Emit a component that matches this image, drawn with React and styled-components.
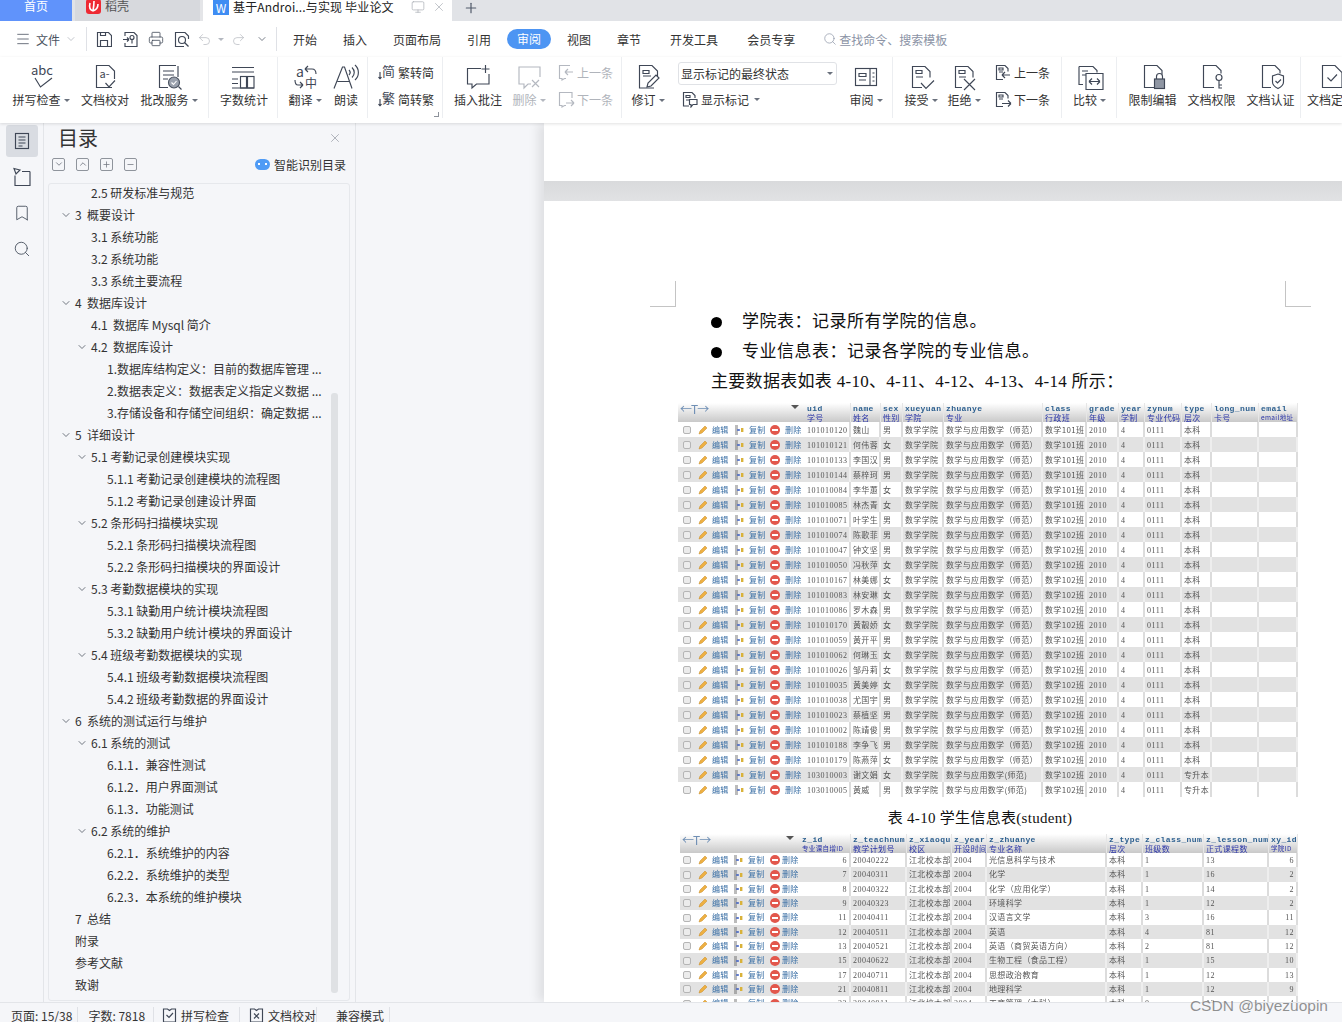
import React from 'react'
import styled, { createGlobalStyle } from 'styled-components'
import { Menu, ChevronDown, ChevronUp, Undo2, Redo2, Printer, Search, X, Plus, Minus, Monitor, Bookmark } from 'lucide-react'

const UI_FONT = '"Noto Sans CJK SC", "Noto Sans", sans-serif'
const DOC_FONT = '"Liberation Serif", "Noto Sans CJK SC", serif'

const GlobalStyle = createGlobalStyle`
  html, body { margin: 0; padding: 0; height: 100%; overflow: hidden; background: #fff; }
  body { font-family: ${UI_FONT}; color: #333; }
  * { box-sizing: border-box; }
`

const Text = ({ x, y, size = 10, children }) => (
  <text x={x} y={y} fontSize={size} fill='currentColor' stroke='none' fontFamily={UI_FONT}>{children}</text>
)

const ICONS = {
  spell: <><Text x={5} y={13} size={13}>abc</Text><path d='M9 16l5.5 9L26 16' /></>,
  proof: <><path d='M22 25.5H6.5v-22H19l5.5 5.5v8' /><Text x={9.5} y={16} size={11}>a-</Text><path d='M15.5 21l3.5 4 6-6.5' /></>,
  correct: <><path d='M22 3.5H5.5v22H14M24 4v11' /><path d='M9 9h11M9 13h11M9 17h5' /><circle cx='20' cy='20.5' r='5.5' fill='#9aa1ad' stroke='#4a5260' /><path d='M17.5 20.5l2 2 3-3.5' stroke='#fff' /><path d='M24.5 24.5l3 3' /></>,
  count: <><path d='M3 5.5h22M3 10h22M3 26h22' /><path d='M3 17h6M3 21.5h6' /><rect x='11.5' y='14.5' width='6' height='11.5' /><rect x='18.5' y='14.5' width='6.5' height='11.5' /></>,
  translate: <><Text x={6} y={15} size={14}>a</Text><Text x={15} y={26} size={12}>中</Text><path d='M15 7l3-3M15 7l3 3M15 7h7c3 0 4 2 4 5' /><path d='M13 23l-3 3M13 23l-3-3M13 23H8c-2 0-3-2-3-5' /></>,
  read: <><path d='M3 26.5L11.5 5h2L21 26.5M6.5 19.5h11.5' /><path d='M18 8c1.5 1.5 1.5 3.5 0 5M21 5.5c3 3 3 7 0 10M24 3c4.5 4 4.5 11 0 15' /></>,
  comment: <><path d='M18 6.5H4.5V22H9v4l4.5-4H26V12' /><path d='M22.5 3v8M18.5 7h8' /></>,
  delComment: <><path d='M26 15V5H5v17h5v4l4-4h3' /><path d='M18 18l7 7M25 18l-7 7' /></>,
  revise: <><path d='M21 26H6.5V3.5H19l5.5 5.5v6' /><path d='M10 8.5h6v3h-6zM10 14h8' /><path d='M14 25l1-4 8-8 3 3-8 8z' /></>,
  review: <><rect x='4.5' y='6.5' width='21' height='17' /><path d='M19 6.5v17M8 11.5h7v3H8zM8 18h7M21.5 11h2M21.5 15h2M21.5 19h2' /></>,
  accept: <><path d='M16 25.5H6.5v-21H19l5 5v6' /><path d='M10 8.5h6v3h-6zM10 15h7' /><path d='M15 21l5 5.5 8-8' /></>,
  reject: <><path d='M13 25.5H6.5v-21H19l5 5v6' /><path d='M10 8.5h6v3h-6zM10 15h7' /><path d='M15 17l11 11M26 17L15 28' /></>,
  compare: <><path d='M4 4.5h14l4 4v2M4 4.5v18h4' /><path d='M7 9h6M7 13h4' /><path d='M11 11.5h17v16H11z' /><path d='M14 19.5h11M14 19.5l3-3M14 19.5l3 3M25 19.5l-3-3M25 19.5l-3 3' /></>,
  lock: <><path d='M17 25.5H6.5v-22H19l5 5v4' /><rect x='16.5' y='17' width='10' height='9.5' fill='#8f96a3' /><path d='M18.5 17v-2.5a3 3 0 016 0V17' /></>,
  key: <><path d='M17 25.5H6.5v-22H19l5 5v3' /><circle cx='22' cy='15.5' r='3' /><path d='M22 18.5v8M22 23h3M22 26h3' /></>,
  shield: <><path d='M15 25.5H6.5v-22H19l5 5v3' /><path d='M22 12l5.5 2v6c0 3-2.5 5-5.5 6.5-3-1.5-5.5-3.5-5.5-6.5v-6z' /><path d='M19.5 19l2 2 3.5-3.5' /></>,
  finalize: <><path d='M26 25.5H6.5v-22H19l7 7z' /><path d='M11.5 15.5l3.5 3.5 6-6.5' /></>,
  toJian: <><Text x={4} y={13} size={13}>简</Text><path d='M2 9v7M2 16l-1.5-2M2 16l1.5-2' /></>,
  toFan: <><Text x={4} y={13} size={13}>繁</Text><path d='M2 9v7M2 16l-1.5-2M2 16l1.5-2' /></>,
  prevC: <><path d='M13 2.5H2.5v13H5V17l2.5-1.5H9' /><path d='M16 9H8M8 9l3-3M8 9l3 3' /></>,
  nextC: <><path d='M15 8V2.5H2.5v13H5V17l2.5-1.5H9' /><path d='M9 13h8M17 13l-3-3M17 13l-3 3' /></>,
  prevD: <><path d='M9 16.5H2.5v-14H11l3 3v3' /><path d='M5 5h4v2H5zM5 9h4' /><path d='M16 12H8M8 12l3-3M8 12l3 3' /></>,
  nextD: <><path d='M9 16.5H2.5v-14H11l3 3v3' /><path d='M5 5h4v2H5zM5 9h4' /><path d='M8 13.5h9M17 13.5l-3-3M17 13.5l-3 3' /></>,
  marks: <><path d='M8 16H2.5V2.5H11l3 3V8' /><path d='M5 5.5h4v2H5zM5 10h3' /><path d='M8.5 9.5h7.5v5h-4L10 17v-2.5H8.5z' /></>,
  save: <><path d='M1.5 1.5h11l3 3v11h-14z' /><path d='M4.5 15.5v-6h7v6M4.5 1.5v3h5v-3' /></>,
  export: <><path d='M3 5V1.5h9l3 3v11H3V12' /><path d='M1 8.5h6M7 8.5L5 6.5M7 8.5l-2 2' /><circle cx='10' cy='6.5' r='2' /><path d='M10 8.5v4' /></>,
  preview: <><path d='M10 15.5H1.5v-14H11l3.5 3.5v3' /><circle cx='8' cy='9' r='3.5' /><path d='M10.5 11.5l4 4' /></>,
  outline: <><path d='M2 1.5l6 1.5-4 4zM10 4.5h8M3 8.5v10h15v-14' /></>,
  page: <><rect x='3.5' y='2.5' width='13' height='15' /><path d='M6.5 6h7M6.5 9h7M6.5 12h7M6.5 15h4' /></>,
  checkDoc: <><path d='M1.5 2h4l2 1.5L9.5 2h4v13h-12z' /><path d='M4.5 8l2.5 2.5 4-4.5' /></>,
  crossDoc: <><path d='M1.5 2h4l2 1.5L9.5 2h4v13h-12z' /><path d='M5 6.5l5 5M10 6.5l-5 5' /></>,
}

const Svg = styled.svg`
  flex: none;
  fill: none;
  stroke: currentColor;
  stroke-width: 1.15;
  color: ${p => (p.$muted ? '#b4b8c0' : '#3f4756')};
`

const Icon = ({ name, size = 30, box, muted }) => (
  <Svg viewBox={`0 0 ${box || size} ${box || size}`} width={size} height={size} $muted={muted}>{ICONS[name]}</Svg>
)

const Page = styled.div`
  position: relative;
  width: 1342px;
  height: 1022px;
  overflow: hidden;
  display: flex;
  flex-direction: column;
`

/* title bar */
const TabBar = styled.div`
  flex: none;
  height: 21px;
  background: #e1e3e7;
  display: flex;
  font-size: 12px;
  line-height: 12px;
`
const HomeTab = styled.div`
  width: 72px;
  background: #6093fb;
  color: #fff;
  text-align: center;
`
const ShellTab = styled.div`
  width: 128px;
  margin-left: 3px;
  background: #d7d9dd;
  border-right: 3px solid #e4e5e8;
  display: flex;
  gap: 4px;
  padding-left: 11px;
  color: #555;
`
const ShellLogo = styled.span`
  width: 15px;
  height: 15px;
  margin-top: -1px;
  border-radius: 3px;
  background: #ee2a33;
  display: flex;
  justify-content: center;
`
const DocTab = styled.div`
  width: 249px;
  background: #fff;
  display: flex;
  padding-left: 10px;
  font-size: 12px;
  line-height: 14px;
  letter-spacing: .15px;
  color: #222;
  white-space: nowrap;
`
const DocLogo = styled.span`
  width: 16px;
  height: 15px;
  background: #3f8df3;
  color: #fff;
  margin-right: 4px;
  display: flex;
  align-items: center;
  justify-content: center;
`
const DocTabTitle = styled.span`
  width: 178px;
`
const TabActions = styled.span`
  display: flex;
  gap: 7px;
  color: #a9adb5;
`
const NewTab = styled.span`
  margin-left: 11px;
  color: #515a6b;
`

/* menu row */
const MenuBar = styled.div`
  flex: none;
  height: 36px;
  background: #fff;
  display: flex;
  align-items: center;
  padding-left: 15px;
  font-size: 12px;
  color: #333;
`
const FileMenu = styled.div`
  display: flex;
  align-items: center;
  width: 71px;
  gap: 5px;
  color: #4a5260;
`
const VBar = styled.span`
  width: 1px;
  height: 24px;
  background: #dfe1e6;
`
const QuickBar = styled.div`
  display: flex;
  align-items: center;
  width: 189px;
  padding-left: 9px;
  gap: 10px;
  color: #3f4756;
`
const GhostIcons = styled.span`
  display: flex;
  align-items: center;
  gap: 3px;
  margin-left: -3px;
  color: #b9bcc3;
`
const Caret = styled.i`
  display: inline-block;
  flex: none;
  margin-left: 3px;
  width: 0;
  height: 0;
  vertical-align: middle;
  border-left: 3px solid transparent;
  border-right: 3px solid transparent;
  border-top: 3px solid ${p => (p.$muted ? '#b4b8c0' : '#6a717d')};
`
const TabList = styled.nav`
  display: flex;
  align-items: center;
  padding-left: 3px;
`
const MenuTab = styled.span`
  padding: 0 13px 0 ${p => (p.$wide ? '16px' : '13px')};
  white-space: nowrap;
  color: #333;
`
const ActiveMenuTab = styled.span`
  margin: 0 3px;
  padding: 0 10px;
  height: 20px;
  line-height: 20px;
  border-radius: 10px;
  background: #4d95f3;
  color: #fff;
`
const SearchBox = styled.div`
  margin-left: 15px;
  display: flex;
  align-items: center;
  gap: 2px;
  color: #8b93a5;
`

/* ribbon */
const Ribbon = styled.div`
  position: relative;
  flex: none;
  height: 66px;
  background: #fff;
  display: flex;
  box-shadow: 0 1px 3px rgba(0, 0, 0, .12);
  z-index: 2;
`
const Group = styled.div`
  flex: none;
  position: relative;
  width: ${p => p.$w}px;
  padding-left: ${p => p.$pad || 0}px;
  display: flex;
  margin-bottom: 5px;
  border-right: ${p => (p.$last ? 'none' : '1px solid #eceef1')};
`
const Tool = styled.div`
  flex: none;
  width: ${p => p.$w}px;
  display: flex;
  flex-direction: column;
  align-items: center;
  padding-top: 5px;
  font-size: 12px;
  line-height: 16px;
  white-space: nowrap;
  color: ${p => (p.$muted ? '#b0b4bb' : '#333')};
`
const ToolLabel = styled.span`
  display: flex;
  align-items: center;
`
const Stack = styled.div`
  flex: none;
  margin-left: ${p => p.$gap || 0}px;
  display: flex;
  flex-direction: column;
  gap: 7px;
  padding-top: 5px;
`
const StackRow = styled.div`
  height: 20px;
  display: flex;
  align-items: center;
  gap: 2px;
  font-size: 12px;
  white-space: nowrap;
  color: ${p => (p.$muted ? '#b0b4bb' : '#333')};
`
const Launcher = styled.i`
  position: absolute;
  right: 3px;
  bottom: 1px;
  width: 5px;
  height: 5px;
  border-right: 1px solid #8d929b;
  border-bottom: 1px solid #8d929b;
`
const Marks = styled.div`
  flex: none;
  width: 159px;
  margin-left: 4px;
  padding-top: 5px;
`
const MarkSelect = styled.div`
  height: 23px;
  border: 1px solid #e0e2e6;
  border-radius: 3px;
  display: flex;
  align-items: center;
  justify-content: space-between;
  padding: 0 3px 0 2px;
  font-size: 12px;
  color: #333;
`
const ShowMarks = styled.div`
  margin-top: 3px;
  padding-left: 3px;
  height: 22px;
  display: flex;
  align-items: center;
  gap: 2px;
  font-size: 12px;
`

/* body */
const Body = styled.div`
  flex: 1;
  min-height: 0;
  display: grid;
  grid-template-columns: 44px 312px 188px 1fr;
  background: #f5f6f9;
`
const Rail = styled.div`
  border-right: 1px solid #e3e5e9;
  padding: 2px 6px 0;
  display: flex;
  flex-direction: column;
  gap: 4px;
  color: #4a5260;
`
const RailItem = styled.div`
  width: 32px;
  height: 32px;
  border-radius: 3px;
  background: ${p => (p.$active ? '#d9dce2' : 'transparent')};
  display: flex;
  align-items: center;
  justify-content: center;
`
const Panel = styled.div`
  border-right: 1px solid #e3e5e9;
  display: flex;
  flex-direction: column;
  padding: 0 5px 1px 4px;
  min-height: 0;
`
const PanelHead = styled.div`
  height: 30px;
  display: flex;
  align-items: center;
  justify-content: space-between;
  padding: 0 8px 0 10px;
  color: #8a8f99;
`
const PanelTitle = styled.h2`
  margin: 0;
  font-size: 20px;
  line-height: 28px;
  font-weight: 400;
  color: #333;
`
const PanelTools = styled.div`
  height: 22px;
  margin-bottom: 8px;
  display: flex;
  align-items: center;
  padding: 0 4px;
  gap: 11px;
`
const TreeButton = styled.span`
  width: 13px;
  height: 13px;
  border: 1px solid #8f949c;
  border-radius: 2px;
  display: flex;
  align-items: center;
  justify-content: center;
  color: #70757f;
`
const SmartToc = styled.div`
  margin-left: auto;
  display: flex;
  align-items: center;
  gap: 4px;
  font-size: 12px;
`
const SmartBadge = styled.span`
  position: relative;
  width: 15px;
  height: 11px;
  border-radius: 6px;
  background: #4f9bf5;
  &::after {
    content: '';
    position: absolute;
    left: 3px;
    right: 3px;
    top: 4px;
    height: 2px;
    border-left: 2px solid #fff;
    border-right: 2px solid #fff;
  }
`
const Tree = styled.div`
  position: relative;
  flex: 1;
  min-height: 0;
  overflow: hidden;
  border: 1px solid #e6e8ec;
  border-radius: 3px;
`
const TreeList = styled.div`
  margin-top: -2.5px;
`
const Scrollbar = styled.i`
  position: absolute;
  right: 11px;
  top: 209px;
  bottom: 7px;
  width: 7px;
  border-radius: 3px;
  background: #dfe1e4;
`
const TocRow = styled.div`
  height: 22px;
  padding-left: ${p => 11 + (p.$level - 1) * 16}px;
  display: flex;
  align-items: center;
  font-size: 12px;
  white-space: pre;
  color: #333;
`
const Chevron = styled.span`
  flex: none;
  width: 15px;
  display: flex;
  color: #444c58;
`
const Gutter = styled.div`
  background: #f5f6f9;
`
const DocArea = styled.div`
  position: relative;
  min-height: 0;
  overflow: hidden;
  background: #fff;
  box-shadow: -6px 0 10px rgba(0, 0, 0, .09);
`
const PrevPage = styled.div`
  height: 58px;
  background: #fff;
`
const PageGap = styled.div`
  height: 20px;
  background: linear-gradient(#d9dadc, #e1e2e4);
`
const Sheet = styled.div`
  position: relative;
  background: #fff;
  padding-top: 106px;
  font-family: ${DOC_FONT};
  color: #111;
`
const CropMark = styled.i`
  position: absolute;
  top: 80px;
  left: ${p => p.$x}px;
  width: 26px;
  height: 26px;
  border-bottom: 1px solid #c4c4c4;
  ${p => (p.$flip ? 'border-left' : 'border-right')}: 1px solid #c4c4c4;
`
const Line = styled.p`
  margin: 0;
  height: 30px;
  line-height: 30px;
  padding-left: 167px;
  font-size: 17px;
  letter-spacing: ${p => (p.$tight ? '.3px' : '.5px')};
  white-space: nowrap;
  display: flex;
  align-items: center;
`
const Bullet = styled.i`
  flex: none;
  width: 11px;
  height: 11px;
  margin-right: 20px;
  border-radius: 50%;
  background: #000;
`
const Caption = styled.p`
  margin: 11px 0 6px;
  height: 20px;
  line-height: 20px;
  text-align: center;
  padding-left: 74px;
  font-size: 15px;
  letter-spacing: .3px;
`

/* pasted table screenshots */
const Shot = styled.div`
  margin-left: ${p => p.$left}px;
  margin-top: ${p => p.$top || 0}px;
  width: ${p => p.$width}px;
  filter: blur(.35px);
  font-family: ${DOC_FONT};
  font-size: 8px;
  letter-spacing: .35px;
  color: #555;
`
const ShotRow = styled.div`
  display: grid;
  grid-template-columns: ${p => p.$cols};
  height: ${p => p.$h}px;
  line-height: ${p => p.$h}px;
  background: ${p => (p.$alt ? '#e2e2e2' : '#fff')};
  white-space: nowrap;
  overflow: hidden;
`
const ShotHead = styled(ShotRow)`
  height: 19px;
  line-height: 9px;
  background: linear-gradient(#fff, #c9c9c9);
`
const HeadCell = styled.div`
  padding: 1px 0 0 2px;
  border-right: 1px solid #e6e6e6;
  overflow: hidden;
`
const FieldName = styled.div`
  font-family: "Liberation Mono", monospace;
  font-weight: 700;
  font-size: 8px;
  letter-spacing: .4px;
  color: #2c5f8f;
`
const FieldCn = styled.div`
  font-family: ${UI_FONT};
  font-size: ${p => (p.$small ? '6.5px' : '8px')};
  color: #2b35a8;
`
const SortBar = styled.div`
  display: flex;
  align-items: flex-start;
  justify-content: space-between;
  padding: 0 6px 0 2px;
  font-family: ${UI_FONT};
  font-size: 12px;
  line-height: 11px;
  letter-spacing: -1px;
  color: #6f8fb5;
`
const SortCaret = styled.i`
  margin-top: 2px;
  border-left: 4px solid transparent;
  border-right: 4px solid transparent;
  border-top: 4px solid #555;
`
const Cell = styled.div`
  padding: 0 2px;
  border-right: 2px solid ${p => (p.$alt ? '#eee' : '#dcdcdc')};
  text-align: ${p => (p.$num ? 'right' : 'left')};
  overflow: hidden;
  font-family: ${UI_FONT};
`
const NumText = styled.span`
  font-family: ${DOC_FONT};
  letter-spacing: .5px;
`
const Actions = styled.div`
  display: flex;
  align-items: center;
  padding-left: ${p => p.$pad}px;
  font-family: ${UI_FONT};
  color: #3a6fa5;
`
const RowCheck = styled.i`
  flex: none;
  width: 8px;
  height: 8px;
  margin-right: 7px;
  border: 1px solid #b5b5b5;
  border-radius: 2px;
  background: #ececec;
`
const ActionLabel = styled.span`
  flex: none;
  width: ${p => p.$w}px;
`
const DropIcon = styled.i`
  flex: none;
  width: 10px;
  height: 10px;
  margin-right: ${p => p.$gap}px;
  border-radius: 50%;
  background: #e2574c;
  position: relative;
  &::after {
    content: '';
    position: absolute;
    left: 2px;
    right: 2px;
    top: 4px;
    height: 2px;
    background: #fff;
  }
`

const Pencil = () => (
  <svg viewBox='0 0 10 10' width={10} height={10} style={{ flex: 'none', marginRight: 4 }}>
    <path d='M1 9l1-3 5-5 2 2-5 5z' fill='#eeb042' stroke='#c98a25' strokeWidth='.5' />
  </svg>
)

const ChangeIcon = () => (
  <svg viewBox='0 0 10 10' width={10} height={10} style={{ flex: 'none', marginRight: 5 }}>
    <path d='M1 1h3M1 3h3M1 5h4M1 7h3M1 9h3' stroke='#555' strokeWidth='.8' />
    <path d='M3 5h3' stroke='#4466cc' strokeWidth='1.4' />
    <rect x='7' y='3' width='2.4' height='4' fill='#d9b23a' />
  </svg>
)

function DataShot ({ left, top, width, cols, rowH, pad, gaps, dropGap, columns, rows }) {
  return (
    <Shot $left={left} $top={top} $width={width}>
      <ShotHead $cols={cols} $h={19}>
        <SortBar><span>←T→</span><SortCaret /></SortBar>
        {columns.map(c => (
          <HeadCell key={c[0]}>
            <FieldName>{c[0]}</FieldName>
            <FieldCn $small={c[3]}>{c[1]}</FieldCn>
          </HeadCell>
        ))}
      </ShotHead>
      {rows.map((row, i) => (
        <ShotRow key={i} $cols={cols} $h={rowH} $alt={i % 2 === 1}>
          <Actions $pad={pad}>
            <RowCheck />
            <Pencil />
            <ActionLabel $w={gaps[0]}>编辑</ActionLabel>
            <ChangeIcon />
            <ActionLabel $w={gaps[1]}>复制</ActionLabel>
            <DropIcon $gap={dropGap} />
            <ActionLabel $w={18}>删除</ActionLabel>
          </Actions>
          {row.map((v, j) => (
            <Cell key={j} $alt={i % 2 === 1} $num={columns[j][2]}>
              {/^[\d]+$/.test(v) ? <NumText>{v}</NumText> : v}
            </Cell>
          ))}
        </ShotRow>
      ))}
    </Shot>
  )
}

const STUDENTS = [
  ['101010120', '魏山', '男'], ['101010121', '何伟蓉', '女'], ['101010133', '李国汉', '男'],
  ['101010144', '蔡梓珂', '男'], ['101010084', '李华蕙', '女'], ['101010085', '林杰青', '女'],
  ['101010071', '叶学生', '男'], ['101010074', '陈歌菲', '男'], ['101010047', '钟文坚', '男'],
  ['101010050', '冯秋萍', '女'], ['101010167', '林美娜', '女'], ['101010083', '林安琳', '女'],
  ['101010086', '罗木森', '男'], ['101010170', '黄靓娇', '女'], ['101010059', '黄开平', '男'],
  ['101010062', '何琳玉', '女'], ['101010026', '邹丹莉', '女'], ['101010035', '黄美婷', '女'],
  ['101010038', '尤国宇', '男'], ['101010023', '蔡植坚', '男'], ['101010002', '陈靖俊', '男'],
  ['101010188', '李争飞', '男'], ['101010179', '陈燕萍', '女'], ['103010003', '谢文娟', '女'],
  ['103010005', '黄威', '男'],
]

const studentRows = STUDENTS.map((s, i) => [
  s[0], s[1], s[2], '数学学院',
  i > 22 ? '数学与应用数学(师范)' : '数学与应用数学（师范）',
  i < 6 ? '数学101班' : '数学102班',
  '2010', '4', '0111', i > 22 ? '专升本' : '本科', '', '',
])

const STUDENT_COLS = [
  ['uid', '学号'], ['name', '姓名'], ['sex', '性别'], ['xueyuan', '学院'], ['zhuanye', '专业'],
  ['class', '行政班'], ['grade', '年级'], ['year', '学制'], ['zynum', '专业代码'], ['type', '层次'],
  ['long_num', '卡号'], ['email', 'email地址', false, true],
]

const COURSE_COLS = [
  ['z_id', '专业课自增ID', true, true], ['z_teachnum', '教学计划号'], ['z_xiaoqu', '校区'], ['z_year', '开设时间'],
  ['z_zhuanye', '专业名称'], ['z_type', '层次'], ['z_class_num', '班级数'], ['z_lesson_num', '正式课程数'],
  ['xy_id', '学院ID', true, true],
]

const courseRows = [
  ['6', '20040222', '光信息科学与技术', '1', '13', '6'],
  ['7', '20040311', '化学', '1', '16', '2'],
  ['8', '20040322', '化学（应用化学）', '1', '14', '2'],
  ['9', '20040323', '环境科学', '1', '12', '2'],
  ['11', '20040411', '汉语言文学', '3', '16', '11'],
  ['12', '20040511', '英语', '4', '81', '12'],
  ['13', '20040521', '英语（商贸英语方向）', '2', '81', '12'],
  ['15', '20040622', '生物工程（食品工程）', '1', '15', '10'],
  ['17', '20040711', '思想政治教育', '1', '12', '13'],
  ['21', '20040811', '地理科学', '1', '12', '9'],
  ['22', '20040911', '工商管理（本科）', '0', '12', '4'],
].map(r => [r[0], r[1], '江北校本部', '2004', r[2], '本科', r[3], r[4], r[5]])

const TOC = [
  [2, '2.5 研发标准与规范'],
  [1, '3  概要设计', 1],
  [2, '3.1 系统功能'],
  [2, '3.2 系统功能'],
  [2, '3.3 系统主要流程'],
  [1, '4  数据库设计', 1],
  [2, '4.1  数据库 Mysql 简介'],
  [2, '4.2  数据库设计', 1],
  [3, '1.数据库结构定义：目前的数据库管理 ...'],
  [3, '2.数据表定义：数据表定义指定义数据 ...'],
  [3, '3.存储设备和存储空间组织：确定数据 ...'],
  [1, '5  详细设计', 1],
  [2, '5.1 考勤记录创建模块实现', 1],
  [3, '5.1.1 考勤记录创建模块的流程图'],
  [3, '5.1.2 考勤记录创建设计界面'],
  [2, '5.2 条形码扫描模块实现', 1],
  [3, '5.2.1 条形码扫描模块流程图'],
  [3, '5.2.2 条形码扫描模块的界面设计'],
  [2, '5.3 考勤数据模块的实现', 1],
  [3, '5.3.1 缺勤用户统计模块流程图'],
  [3, '5.3.2 缺勤用户统计模块的界面设计'],
  [2, '5.4 班级考勤数据模块的实现', 1],
  [3, '5.4.1 班级考勤数据模块流程图'],
  [3, '5.4.2 班级考勤数据的界面设计'],
  [1, '6  系统的测试运行与维护', 1],
  [2, '6.1 系统的测试', 1],
  [3, '6.1.1．兼容性测试'],
  [3, '6.1.2．用户界面测试'],
  [3, '6.1.3．功能测试'],
  [2, '6.2 系统的维护', 1],
  [3, '6.2.1．系统维护的内容'],
  [3, '6.2.2．系统维护的类型'],
  [3, '6.2.3．本系统的维护模块'],
  [1, '7  总结'],
  [1, '附录'],
  [1, '参考文献'],
  [1, '致谢'],
]

/* status bar */
const StatusBar = styled.div`
  flex: none;
  position: relative;
  z-index: 2;
  height: 20px;
  background: #f5f6f9;
  border-top: 1px solid #e3e5e9;
  display: flex;
  padding-top: 4px;
  padding-left: 1px;
  font-size: 12px;
  line-height: 18px;
  color: #333;
  white-space: nowrap;
  overflow: hidden;
`
const StatusItem = styled.div`
  display: flex;
  align-items: flex-start;
  gap: 4px;
  padding: 0 ${p => p.$r}px 0 ${p => p.$l}px;
  border-right: 1px solid #dfe1e6;
`
const Watermark = styled.div`
  position: absolute;
  right: 14px;
  bottom: 7px;
  z-index: 3;
  font-family: "Liberation Sans", sans-serif;
  font-size: 15.5px;
  color: rgba(110, 110, 110, .75);
`

function Tool2 ({ icon, label, w, caret, muted }) {
  return (
    <Tool $w={w} $muted={muted}>
      <Icon name={icon} muted={muted} />
      <ToolLabel>{label}{caret && <Caret $muted={muted} />}</ToolLabel>
    </Tool>
  )
}

function App () {
  return (
    <Page>
      <GlobalStyle />
      <TabBar>
        <HomeTab>首页</HomeTab>
        <ShellTab>
          <ShellLogo>
            <svg viewBox='0 0 15 15' width={15} height={15} fill='none' stroke='#fff' strokeWidth='1.6'>
              <path d='M4 4c-1 4 0 7 3 8M8 2c0 4-.5 7-1 10M12 5c0 3-2 6-5 7' />
            </svg>
          </ShellLogo>
          稻壳
        </ShellTab>
        <DocTab>
          <DocLogo>W</DocLogo>
          <DocTabTitle>基于Androi...与实现 毕业论文</DocTabTitle>
          <TabActions><Monitor size={14} strokeWidth={1.2} /><X size={14} strokeWidth={1.2} /></TabActions>
        </DocTab>
        <NewTab><Plus size={16} strokeWidth={1.8} /></NewTab>
      </TabBar>

      <MenuBar>
        <FileMenu>
          <Menu size={16} strokeWidth={1.2} />
          <span>文件</span>
          <ChevronDown size={12} strokeWidth={1.2} color='#9aa0aa' />
        </FileMenu>
        <VBar />
        <QuickBar>
          <Icon name='save' size={16} />
          <Icon name='export' size={16} />
          <Printer size={16} strokeWidth={1.2} />
          <Icon name='preview' size={16} />
          <GhostIcons><Undo2 size={15} strokeWidth={1.2} /><Caret $muted /></GhostIcons>
          <GhostIcons><Redo2 size={15} strokeWidth={1.2} /></GhostIcons>
          <ChevronDown size={12} strokeWidth={1.4} />
        </QuickBar>
        <VBar />
        <TabList>
          <MenuTab>开始</MenuTab>
          <MenuTab>插入</MenuTab>
          <MenuTab>页面布局</MenuTab>
          <MenuTab>引用</MenuTab>
          <ActiveMenuTab>审阅</ActiveMenuTab>
          <MenuTab>视图</MenuTab>
          <MenuTab>章节</MenuTab>
          <MenuTab $wide>开发工具</MenuTab>
          <MenuTab $wide>会员专享</MenuTab>
        </TabList>
        <SearchBox><Search size={14} strokeWidth={1.2} />查找命令、搜索模板</SearchBox>
      </MenuBar>

      <Ribbon>
        <Group $w={209} $pad={9}>
          <Tool2 w={64} icon='spell' label='拼写检查' caret />
          <Tool2 w={64} icon='proof' label='文档校对' />
          <Tool2 w={64} icon='correct' label='批改服务' caret />
        </Group>
        <Group $w={69}><Tool2 w={70} icon='count' label='字数统计' /></Group>
        <Group $w={90}>
          <Tool2 w={54} icon='translate' label='翻译' caret />
          <Tool2 w={28} icon='read' label='朗读' />
        </Group>
        <Group $w={75} $pad={10}>
          <Stack>
            <StackRow><Icon name='toJian' size={18} />繁转简</StackRow>
            <StackRow><Icon name='toFan' size={18} />简转繁</StackRow>
          </Stack>
          <Launcher />
        </Group>
        <Group $w={179}>
          <Tool2 w={70} icon='comment' label='插入批注' />
          <Tool2 w={32} icon='delComment' label='删除' caret muted />
          <Stack $gap={12}>
            <StackRow $muted><Icon name='prevC' size={18} muted />上一条</StackRow>
            <StackRow $muted><Icon name='nextC' size={18} muted />下一条</StackRow>
          </Stack>
        </Group>
        <Group $w={271}>
          <Tool2 w={52} icon='revise' label='修订' caret />
          <Marks>
            <MarkSelect>显示标记的最终状态<Caret /></MarkSelect>
            <ShowMarks><Icon name='marks' size={18} />显示标记<Caret /></ShowMarks>
          </Marks>
          <Tool2 w={58} icon='review' label='审阅' caret />
        </Group>
        <Group $w={169}>
          <Tool2 w={56} icon='accept' label='接受' caret />
          <Tool2 w={30} icon='reject' label='拒绝' caret />
          <Stack $gap={15}>
            <StackRow><Icon name='prevD' size={18} />上一条</StackRow>
            <StackRow><Icon name='nextD' size={18} />下一条</StackRow>
          </Stack>
        </Group>
        <Group $w={55}><Tool2 w={55} icon='compare' label='比较' caret /></Group>
        <Group $w={184} $pad={6}>
          <Tool2 w={59} icon='lock' label='限制编辑' />
          <Tool2 w={59} icon='key' label='文档权限' />
          <Tool2 w={59} icon='shield' label='文档认证' />
        </Group>
        <Group $w={41} $last>
          <Tool2 w={60} icon='finalize' label='文档定稿' />
        </Group>
      </Ribbon>

      <Body>
        <Rail>
          <RailItem $active><Icon name='page' size={20} /></RailItem>
          <RailItem><Icon name='outline' size={20} /></RailItem>
          <RailItem><Bookmark size={18} strokeWidth={1.2} /></RailItem>
          <RailItem><Search size={18} strokeWidth={1.2} /></RailItem>
        </Rail>
        <Panel>
          <PanelHead>
            <PanelTitle>目录</PanelTitle>
            <X size={14} strokeWidth={1.1} />
          </PanelHead>
          <PanelTools>
            <TreeButton><ChevronDown size={10} /></TreeButton>
            <TreeButton><ChevronUp size={10} /></TreeButton>
            <TreeButton><Plus size={9} /></TreeButton>
            <TreeButton><Minus size={9} /></TreeButton>
            <SmartToc><SmartBadge />智能识别目录</SmartToc>
          </PanelTools>
          <Tree>
            <TreeList>
              {TOC.map(([level, title, open]) => (
                <TocRow key={title} $level={level}>
                  <Chevron>{open && <ChevronDown size={12} strokeWidth={1.5} />}</Chevron>
                  {title}
                </TocRow>
              ))}
            </TreeList>
            <Scrollbar />
          </Tree>
        </Panel>
        <Gutter />
        <DocArea>
          <PrevPage />
          <PageGap />
          <Sheet>
            <CropMark $x={106} />
            <CropMark $x={741} $flip />
            <Line><Bullet />学院表：记录所有学院的信息。</Line>
            <Line><Bullet />专业信息表：记录各学院的专业信息。</Line>
            <Line $tight>主要数据表如表 4-10、4-11、4-12、4-13、4-14 所示：</Line>
            <DataShot
              left={134}
              top={6}
              width={620}
              cols='127px 46px 30px 22px 41px 99px 44px 32px 26px 37px 30px 47px 39px'
              rowH={15}
              pad={5}
              gaps={[22, 21]}
              dropGap={5}
              columns={STUDENT_COLS}
              rows={studentRows}
            />
            <Caption>表 4-10 学生信息表(student)</Caption>
            <DataShot
              left={136}
              width={618}
              cols='120px 51px 56px 45px 35px 120px 36px 61px 65px 29px'
              rowH={14.35}
              pad={3}
              gaps={[21, 22]}
              dropGap={2}
              columns={COURSE_COLS}
              rows={courseRows}
            />
          </Sheet>
        </DocArea>
      </Body>

      <StatusBar>
        <StatusItem $l={10} $r={5}>页面: 15/38</StatusItem>
        <StatusItem $l={10} $r={8}>字数: 7818</StatusItem>
        <StatusItem $l={8} $r={10}><Icon name='checkDoc' size={15} />拼写检查</StatusItem>
        <StatusItem $l={9} $r={0}><Icon name='crossDoc' size={15} />文档校对</StatusItem>
        <StatusItem $l={19} $r={5}>兼容模式</StatusItem>
      </StatusBar>
      <Watermark>CSDN @biyezuopin</Watermark>
    </Page>
  )
}

export default App
